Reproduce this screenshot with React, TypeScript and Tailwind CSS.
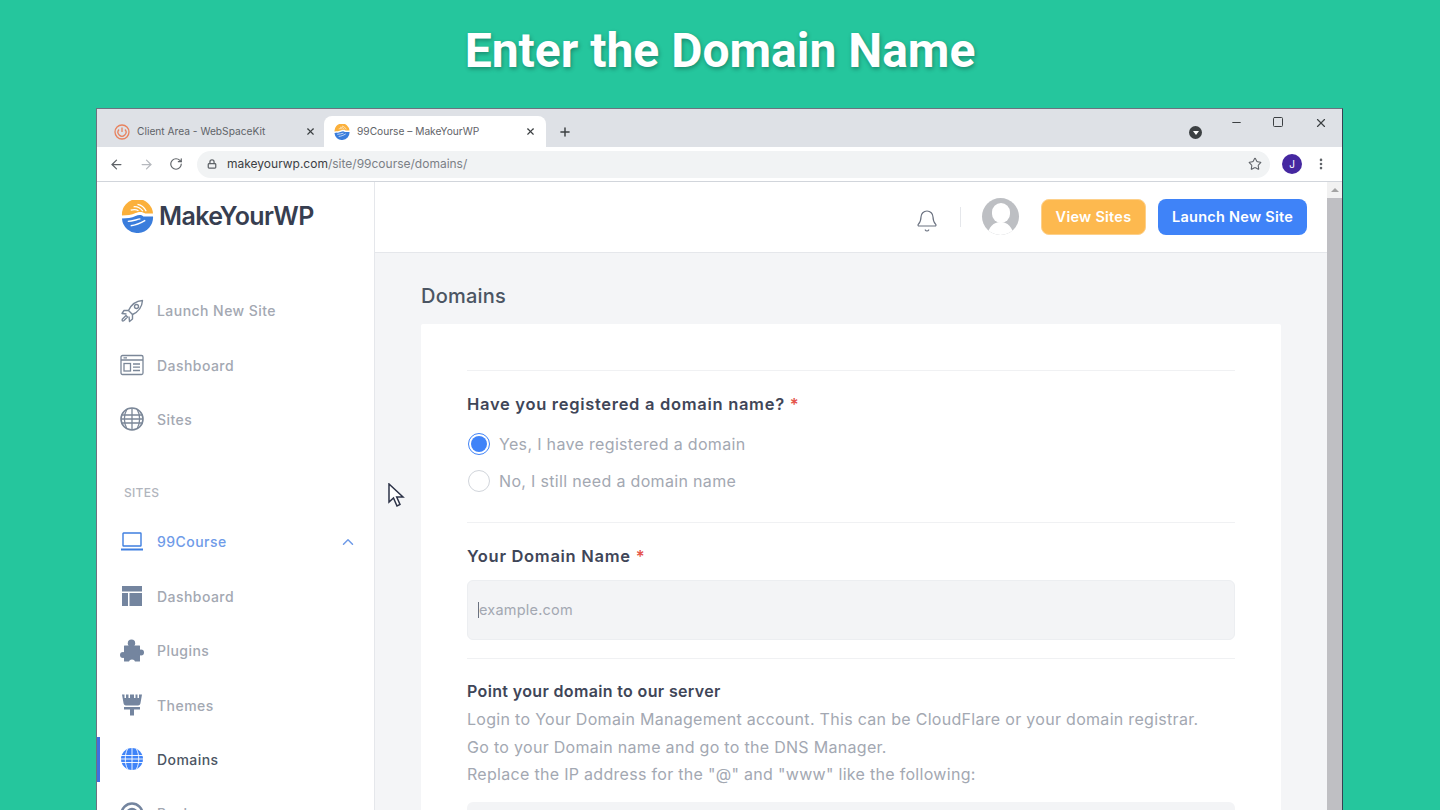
import React from "react";
import { ArrowLeft, ArrowRight, RotateCw, Lock, Star, X, Plus, Minus, Square, Bell, ChevronUp, EllipsisVertical } from "lucide-react";

const Logo = ({ size }: { size: number }) => (
  <svg width={size} height={size} viewBox="0 0 34 34" className="shrink-0">
    <path d="M1 16A16 16 0 0 1 33 14L25 14C22 11.5 18 12 15 13.5C11 15.5 6 16 1 16Z" fill="#fbb03b" />
    <path d="M1 19C6 19 11 18.5 15 16.5C18 15 21 15 23 17H33A16 16 0 0 1 1 19Z" fill="#3a7ddc" />
    <path d="M17 4.5C21 5 24 7.5 26 11.5M13 7C17 6.5 20 8.5 22.5 11.5M10 10.5C13 9.5 15.5 9.5 18 11" stroke="#fff" strokeWidth="1.3" fill="none" />
    <path d="M7 22C12 22 16 20 20 19.5M10 26.5C15 26 20 24 25 21" stroke="#fff" strokeWidth="1.4" fill="none" />
  </svg>
);

const RocketIcon = () => (
  <svg width="24" height="24" viewBox="0 0 24 24" fill="none" stroke="#7b8798" strokeWidth="1.4" strokeLinejoin="round">
    <path d="M8.5 11.5C11 6 16 2 22.5 1.5C22 8 18 13 12.5 15.5Z" />
    <circle cx="16.5" cy="7.5" r="2" />
    <path d="M8.5 11.5L4 11.5L2 14.5L6.5 15M12.5 15.5L12.5 20L9.5 22.5L9 17.5" />
    <path d="M6 16.5L2.5 20C1.5 21.5 2.5 22.5 4 21.5L7.5 18Z" />
  </svg>
);

const GlobeLine = () => (
  <svg width="24" height="24" viewBox="0 0 24 24" fill="none" stroke="#7b8798" strokeWidth="1.3">
    <circle cx="12" cy="12" r="11" strokeWidth="1.6" />
    <path d="M1.5 8H22.5M1 12H23M1.5 16H22.5M12 1V23M7 2C3.5 8 3.5 16 7 22M17 2C20.5 8 20.5 16 17 22" />
  </svg>
);

const OutlineDash = () => (
  <svg width="24" height="24" viewBox="0 0 24 24" fill="none" stroke="#7b8798" strokeWidth="1.3">
    <rect x="1" y="2.5" width="22" height="19" rx="1.5" />
    <path d="M1 7H23M3.5 4.8H7" />
    <rect x="4" y="10.5" width="6.5" height="7.5" />
    <path d="M13 11H20M13 14.2H20M13 17.5H20" />
  </svg>
);

const LayoutFill = () => (
  <svg width="22" height="22" viewBox="0 0 22 22" fill="#74859f">
    <rect x="1" y="1" width="20" height="5.5" />
    <rect x="1" y="8" width="6" height="13" />
    <rect x="8.5" y="8" width="12.5" height="13" />
  </svg>
);

const Puzzle = () => (
  <svg width="24" height="24" viewBox="0 0 24 24" fill="#74859f">
    <rect x="4" y="6.5" width="16" height="16" rx="0.5" />
    <circle cx="11.5" cy="4.2" r="3.7" />
    <circle cx="21" cy="13.5" r="3" />
    <circle cx="3" cy="16" r="3" />
    <circle cx="12" cy="23.5" r="3" fill="#fff" />
  </svg>
);

const Brush = () => (
  <svg width="22" height="22" viewBox="0 0 22 22" fill="#74859f">
    <path d="M1 0.5H3.5V4H5V0.5H7.5V4H9V0.5H13V4H14.5V0.5H16.5V4H18V0.5H21L19.5 9C19.3 10.5 18.5 11.5 17 11.5H5C3.5 11.5 2.7 10.5 2.5 9Z" />
    <path d="M3 13H19V15.5H13V21.5H9V15.5H3Z" />
  </svg>
);

const BlueGlobe = () => (
  <svg width="22" height="22" viewBox="0 0 22 22" fill="#3f83f8" stroke="#fff" strokeWidth="0.9">
    <circle cx="11" cy="11" r="11" stroke="none" />
    <path d="M0 7.5H22M0 11H22M0 14.5H22M11 0V22M6.5 1C3.5 7 3.5 15 6.5 21M15.5 1C18.5 7 18.5 15 15.5 21" fill="none" />
  </svg>
);

const Laptop = () => (
  <svg width="22" height="20" viewBox="0 0 22 20" fill="none" stroke="#3f7fe0" strokeWidth="1.4">
    <rect x="2" y="1" width="18" height="13" rx="0.5" />
    <path d="M0 17.5H22" strokeWidth="2" />
  </svg>
);

const Ring = () => (
  <svg width="24" height="24" viewBox="0 0 24 24" fill="none" stroke="#74859f" strokeWidth="2.5">
    <circle cx="12" cy="12" r="10.5" />
    <circle cx="12" cy="12" r="5" />
  </svg>
);

const Row = ({ icon, label, tone = "text-[#a3a8b2]", right }: { icon: React.ReactNode; label: string; tone?: string; right?: React.ReactNode }) => (
  <div className="h-[54.4px] shrink-0 flex items-center pl-[23px] pr-[17px]">
    <div className="w-[24px] flex justify-center mr-[13px]">{icon}</div>
    <span className={`text-[14px] font-medium tracking-[0.45px] flex-1 ${tone}`}>{label}</span>
    {right}
  </div>
);

const Req = () => <span className="text-[#e5534b] ml-[5px] tracking-normal">*</span>;

export default function App() {
  return (
    <div className="w-[1440px] h-[810px] overflow-hidden bg-[#25c69d] flex flex-col relative font-['Inter',sans-serif]">
      <div className="h-[108px] shrink-0 flex justify-center pt-[22px]">
        <h1 className="font-['Roboto',sans-serif] font-bold text-[48px] leading-[58px] text-white [text-shadow:1px_2px_4px_rgba(0,0,0,0.3)]">Enter the Domain Name</h1>
      </div>

      <div className="ml-[96px] w-[1247px] flex-1 min-h-0 flex flex-col border-x border-t border-[#6b7280] border-r-[#374151] bg-white">
        {/* tab strip */}
        <div className="h-[38px] shrink-0 bg-[#dee1e6] flex items-end pl-[7px] relative">
          <div className="w-[220px] h-[31px] flex items-center pl-[10px] pr-[8px] text-[10.2px] text-[#5f6368]">
            <svg width="16" height="16" viewBox="0 0 16 16" fill="none" stroke="#e8825e" strokeWidth="1.3" className="mr-[7px] shrink-0">
              <circle cx="8" cy="8" r="7" />
              <path d="M8 3.5V8M5 5.5A4 4 0 1 0 11 5.5" />
            </svg>
            <span className="flex-1">Client Area - WebSpaceKit</span>
            <X size={11} strokeWidth={2.5} className="text-[#3c4043]" />
          </div>
          <div className="w-[222px] h-[31px] rounded-t-lg bg-white flex items-center pl-[10px] pr-[10px] text-[10.2px] text-[#5f6368]">
            <Logo size={16} />
            <span className="flex-1 ml-[7px]">99Course – MakeYourWP</span>
            <X size={11} strokeWidth={2.5} className="text-[#3c4043]" />
          </div>
          <div className="h-[31px] flex items-center ml-[12px] text-[#3c4043]">
            <Plus size={14} strokeWidth={2.5} />
          </div>
          <div className="flex-1" />
          <div className="h-[38px] flex items-start pt-[7px] pr-[14px]">
            <div className="w-[13px] h-[13px] rounded-full bg-[#3c4043] flex items-center justify-center mt-[10px] mr-[28px]">
              <div className="w-0 h-0 border-x-[3px] border-x-transparent border-t-[4px] border-t-white" />
            </div>
            <Minus size={13} strokeWidth={2} className="text-[#3c4043] mr-[29px]" />
            <Square size={12} strokeWidth={2} className="text-[#3c4043] mr-[30px]" />
            <X size={14} strokeWidth={2} className="text-[#3c4043]" />
          </div>
        </div>

        {/* toolbar */}
        <div className="h-[35px] shrink-0 bg-white border-b border-[#d1d5db] flex items-center pl-[12px] pr-[14px]">
          <ArrowLeft size={15} strokeWidth={2} className="text-[#5f6368]" />
          <ArrowRight size={15} strokeWidth={2} className="text-[#b6b9be] ml-[15px]" />
          <RotateCw size={14} strokeWidth={2} className="text-[#5f6368] ml-[15px]" />
          <div className="ml-[14px] w-[1073px] h-[27px] rounded-full bg-[#f1f3f4] flex items-center pl-[10px] pr-[8px]">
            <Lock size={10} strokeWidth={3} className="text-[#5f6368]" />
            <span className="ml-[10px] text-[12px] flex-1">
              <span className="text-[#3c4043]">makeyourwp.com</span>
              <span className="text-[#7b8086]">/site/99course/domains/</span>
            </span>
            <Star size={14} strokeWidth={1.8} className="text-[#5f6368]" />
          </div>
          <div className="ml-[12px] w-[20px] h-[20px] rounded-full bg-[#4527a0] text-white text-[10px] flex items-center justify-center">J</div>
          <EllipsisVertical size={14} strokeWidth={2.5} className="text-[#5f6368] ml-[12px]" />
        </div>

        {/* page */}
        <div className="flex-1 min-h-0 flex">
          {/* sidebar */}
          <aside className="w-[278px] shrink-0 border-r border-[#e5e7eb] bg-white flex flex-col overflow-hidden">
            <div className="h-[101.5px] shrink-0 flex items-start pl-[24px] pt-[18px]">
              <Logo size={33} />
              <span className="ml-[5px] text-[25px] leading-[33px] font-semibold text-[#373e50] tracking-[-0.6px]">MakeYourWP</span>
            </div>
            <Row icon={<RocketIcon />} label="Launch New Site" />
            <Row icon={<OutlineDash />} label="Dashboard" />
            <Row icon={<GlobeLine />} label="Sites" />
            <div className="h-[68px] shrink-0 flex items-start pl-[27px] pt-[38px] text-[12px] leading-[16px] font-medium tracking-[0.3px] text-[#b1b5bd]">SITES</div>
            <Row icon={<Laptop />} label="99Course" tone="text-[#6f9be8]" right={<ChevronUp size={18} strokeWidth={2} className="text-[#6f9be8]" />} />
            <Row icon={<LayoutFill />} label="Dashboard" />
            <Row icon={<Puzzle />} label="Plugins" />
            <Row icon={<Brush />} label="Themes" />
            <div className="relative shrink-0">
              <div className="absolute left-0 top-[5px] w-[3px] h-[45px] bg-[#3f6fe0]" />
              <Row icon={<BlueGlobe />} label="Domains" tone="text-[#4b5563]" />
            </div>
            <Row icon={<Ring />} label="Backups" />
          </aside>

          {/* main */}
          <div className="flex-1 min-w-0 flex flex-col bg-[#f4f5f7]">
            <div className="h-[71px] shrink-0 bg-white border-b border-[#e5e7eb] flex items-center justify-end pr-[20px] pb-[1px]">
              <Bell size={24} strokeWidth={1.2} className="text-[#6b7280] mt-[9px]" />
              <div className="w-px h-[20px] bg-[#e5e7eb] ml-[21px] mr-[21px]" />
              <div className="w-[37px] h-[37px] rounded-full bg-[#bdbfc3] relative overflow-hidden mr-[22px]">
                <div className="absolute left-[9.5px] top-[5px] w-[18px] h-[20px] rounded-full bg-white" />
                <div className="absolute left-[6px] top-[24px] w-[25px] h-[16px] rounded-t-full bg-white" />
              </div>
              <button className="w-[105px] h-[36px] rounded-lg bg-[#fdb94f] border border-[#fdd08a] text-white text-[14.5px] font-semibold tracking-[0.25px] mr-[12px]">View Sites</button>
              <button className="w-[149px] h-[36px] rounded-lg bg-[#3f83f8] text-white text-[14.5px] font-semibold tracking-[0.25px]">Launch New Site</button>
            </div>
            <div className="flex-1 min-h-0 px-[46px] overflow-hidden">
              <h2 className="h-[71px] shrink-0 pt-[29px] text-[20px] leading-[28px] font-medium tracking-[0.2px] text-[#4b5563]">Domains</h2>
              <div className="bg-white px-[46px] pt-[46px] rounded-t-[2px]">
                <div className="border-t border-[#f0f1f3] pt-[21px] pb-[23px]">
                  <div className="text-[16.5px] leading-[24px] font-semibold tracking-[0.7px] text-[#3f4658]">Have you registered a domain name?<Req /></div>
                  <div className="mt-[17px] flex items-center h-[22px]">
                    <span className="w-[22px] h-[22px] ml-[1px] rounded-full border border-[#3f83f8] flex items-center justify-center">
                      <span className="w-[16px] h-[16px] rounded-full bg-[#3f83f8]" />
                    </span>
                    <span className="ml-[9px] text-[16px] tracking-[0.33px] text-[#a3a8b2]">Yes, I have registered a domain</span>
                  </div>
                  <div className="mt-[15px] flex items-center h-[22px]">
                    <span className="w-[22px] h-[22px] ml-[1px] rounded-full border border-[#d1d5db]" />
                    <span className="ml-[9px] text-[16px] tracking-[0.33px] text-[#a3a8b2]">No, I still need a domain name</span>
                  </div>
                  <div className="h-[7px]" />
                </div>
                <div className="border-t border-[#f0f1f3] pt-[21px] pb-[18px]">
                  <div className="text-[16.5px] leading-[24px] font-semibold tracking-[0.7px] text-[#3f4658]">Your Domain Name<Req /></div>
                  <div className="mt-[12px] h-[60px] rounded-md bg-[#f3f4f6] border border-[#eceef1] flex items-center pl-[10px]">
                    <span className="w-px h-[16px] bg-[#6b7280]" />
                    <span className="text-[14.5px] tracking-[0.2px] text-[#a3a8b2]">example.com</span>
                  </div>
                </div>
                <div className="border-t border-[#f0f1f3] pt-[20px]">
                  <div className="text-[16px] leading-[24px] font-semibold tracking-[0.35px] text-[#3f4658]">Point your domain to our server</div>
                  <p className="text-[16px] leading-[27.6px] tracking-[0.3px] text-[#a3a8b2] mt-[3px]">
                    Login to Your Domain Management account. This can be CloudFlare or your domain registrar.<br />
                    Go to your Domain name and go to the DNS Manager.<br />
                    Replace the IP address for the "@" and "www" like the following:
                  </p>
                  <div className="mt-[13px] h-[60px] rounded-t-md bg-[#f3f4f6]" />
                </div>
              </div>
            </div>
          </div>

          {/* scrollbar */}
          <div className="w-[15px] shrink-0 flex flex-col bg-[#f1f1f1]">
            <div className="h-[16px] flex items-center justify-center">
              <div className="w-0 h-0 border-x-[4px] border-x-transparent border-b-[4px] border-b-[#a3a3a3]" />
            </div>
            <div className="flex-1 bg-[#bfbfc3]" />
          </div>
        </div>
      </div>

      {/* mouse cursor */}
      <svg width="18" height="26" viewBox="0 0 18 26" className="absolute left-[388px] top-[483px]" fill="#fff" stroke="#2d3348" strokeWidth="1.5">
        <path d="M1 1V19L5.5 15L9 23L12 21.5L8.7 14H15Z" />
      </svg>
    </div>
  );
}
